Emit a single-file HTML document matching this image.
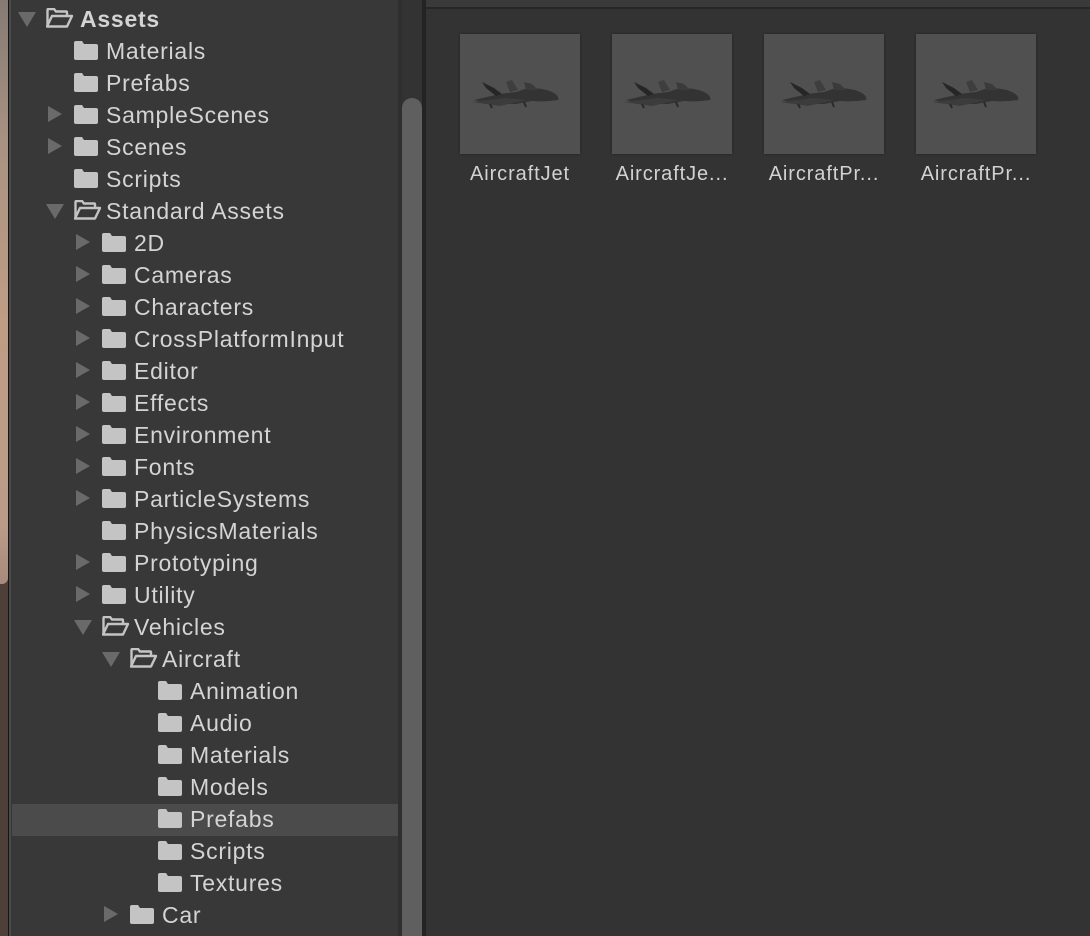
<!DOCTYPE html>
<html><head><meta charset="utf-8"><style>
*{margin:0;padding:0;box-sizing:border-box}
html,body{width:1090px;height:936px;overflow:hidden}
body{background:#333;font-family:"Liberation Sans","DejaVu Sans",sans-serif;position:relative}
.strip{position:absolute;left:0;top:0;width:8px;height:936px;background:#4e4038}
.strip2{position:absolute;left:0;top:0;width:8px;height:584px;border-radius:0 0 6px 0;background:linear-gradient(#857b74 0%,#a99282 25%,#bf9d84 55%,#bb9a88 90%,#a88a7c 100%)}
.b1{position:absolute;left:8px;top:0;width:1px;height:936px;background:#151515}
.b2{position:absolute;left:9px;top:0;width:2px;height:936px;background:#4a4a4a}
.left{position:absolute;left:11px;top:0;width:387px;height:936px;background:#383838}
.gut{position:absolute;left:398px;top:0;width:4px;height:936px;background:#2f2f2f}
.thumb{position:absolute;left:402px;top:98px;width:20px;height:838px;border-radius:10px 10px 0 0;background:#5f5f5f}
.gut2{position:absolute;left:422px;top:0;width:4px;height:936px;background:#232323}
.right{position:absolute;left:426px;top:0;width:664px;height:936px;background:#333}
.topbar{position:absolute;left:426px;top:0;width:664px;height:9px;background:#3a3a3a;border-bottom:2px solid #262626}
.sel{position:absolute;left:12px;top:804px;width:386px;height:32px;background:#4b4b4b}
.row{position:absolute;height:32px;line-height:34px;font-size:23px;color:#d4d4d4;letter-spacing:0.75px;white-space:nowrap}
.arr{position:absolute}
.tile{position:absolute;top:34px;width:120px;height:120px;background:#505050;box-shadow:0 0 2px #222}
.lbl{position:absolute;top:163px;width:160px;text-align:center;font-size:20px;color:#d2d2d2;letter-spacing:0.9px}
</style></head><body>
<div class="strip"></div><div class="strip2"></div><div class="b1"></div><div class="b2"></div>
<div class="left"></div><div class="sel"></div>
<div class="gut"></div><div class="thumb"></div><div class="gut2"></div>
<div class="right"></div><div class="topbar"></div>
<svg width="0" height="0" style="position:absolute">
<defs>
<g id="fc"><path d="M0 2 Q0 0 2 0 H8 L10 3 H22 Q24 3 24 5 V17 Q24 19 22 19 H2 Q0 19 0 17 Z" fill="#c4c4c4"/></g>
<g id="fo"><path d="M1.5 18 V2 Q1.5 1 2.5 1 H8 L10 3.5 H20 Q21 3.5 21 4.5 V7.5" fill="none" stroke="#c4c4c4" stroke-width="2.4"/><path d="M1 18.5 L6 8 H26 L21 18.5 Z" fill="none" stroke="#c4c4c4" stroke-width="2.4" stroke-linejoin="round"/></g>
<g id="ar"><path d="M0 0 L14 8 L0 16 Z" fill="#6a6a6a"/></g>
<g id="ad"><path d="M0 0 H18 L9 15 Z" fill="#6a6a6a"/></g>
</defs></svg>
<div id="tree"></div>
<script>
var items=[
[0,'Assets','d',1],[1,'Materials',''],[1,'Prefabs',''],[1,'SampleScenes','r'],[1,'Scenes','r'],[1,'Scripts',''],[1,'Standard Assets','d'],
[2,'2D','r'],[2,'Cameras','r'],[2,'Characters','r'],[2,'CrossPlatformInput','r'],[2,'Editor','r'],[2,'Effects','r'],[2,'Environment','r'],[2,'Fonts','r'],[2,'ParticleSystems','r'],[2,'PhysicsMaterials',''],[2,'Prototyping','r'],[2,'Utility','r'],[2,'Vehicles','d'],
[3,'Aircraft','d'],[4,'Animation',''],[4,'Audio',''],[4,'Materials',''],[4,'Models',''],[4,'Prefabs',''],[4,'Scripts',''],[4,'Textures',''],[3,'Car','r']];
var h='';
items.forEach(function(it,i){
 var L=it[0],top=2+32*i,fx=46+28*L,ax=fx-28;
 if(it[2]=='r') h+='<svg class="arr" style="left:'+(ax+2)+'px;top:'+(top+8)+'px" width="16" height="16"><use href="#ar"/></svg>';
 if(it[2]=='d') h+='<svg class="arr" style="left:'+ax+'px;top:'+(top+10)+'px" width="18" height="16"><use href="#ad"/></svg>';
 var open=it[2]=='d';
 h+='<svg class="arr" style="left:'+fx+'px;top:'+(top+(open?6:7))+'px" width="28" height="21"><use href="#'+(open?'fo':'fc')+'"/></svg>';
 h+='<div class="row" style="left:'+(fx+(L==0?34:32))+'px;top:'+top+'px;'+(it[3]?'font-weight:bold;':'')+'">'+it[1]+'</div>';
});
document.getElementById('tree').innerHTML=h;
</script>
<svg width="0" height="0" style="position:absolute"><defs>
<g id="jet">
<path d="M14 66 L40 60 L56 58 L68 54 Q84 54 92 58 Q100 62 98 66 Q86 68 72 67 L56 70 L30 70 Z" fill="#333"/>
<path d="M22 48 L34 54 L42 60 L36 62 L26 54 Z" fill="#262626"/>
<path d="M46 48 L52 46 L58 56 L50 58 Z" fill="#3e3e3e"/>
<path d="M64 48 L72 50 L78 56 L66 56 Z" fill="#3a3a3a"/>
<path d="M12 68 L46 64 L66 66 L40 72 Z" fill="#3c3c3c"/>
<path d="M30 70 L32 74 M64 68 L66 73" stroke="#2a2a2a" stroke-width="2"/>
</g>
</defs></svg>
<div class="tile" style="left:460px"><svg width="120" height="120"><use href="#jet" y="0"/></svg></div>
<div class="tile" style="left:612px"><svg width="120" height="120"><use href="#jet" y="0"/></svg></div>
<div class="tile" style="left:764px"><svg width="120" height="120"><use href="#jet" y="0" x="4"/></svg></div>
<div class="tile" style="left:916px"><svg width="120" height="120"><use href="#jet" y="0" x="4"/></svg></div>
<div class="lbl" style="left:440px">AircraftJet</div>
<div class="lbl" style="left:592px">AircraftJe...</div>
<div class="lbl" style="left:744px">AircraftPr...</div>
<div class="lbl" style="left:896px">AircraftPr...</div>
</body></html>
